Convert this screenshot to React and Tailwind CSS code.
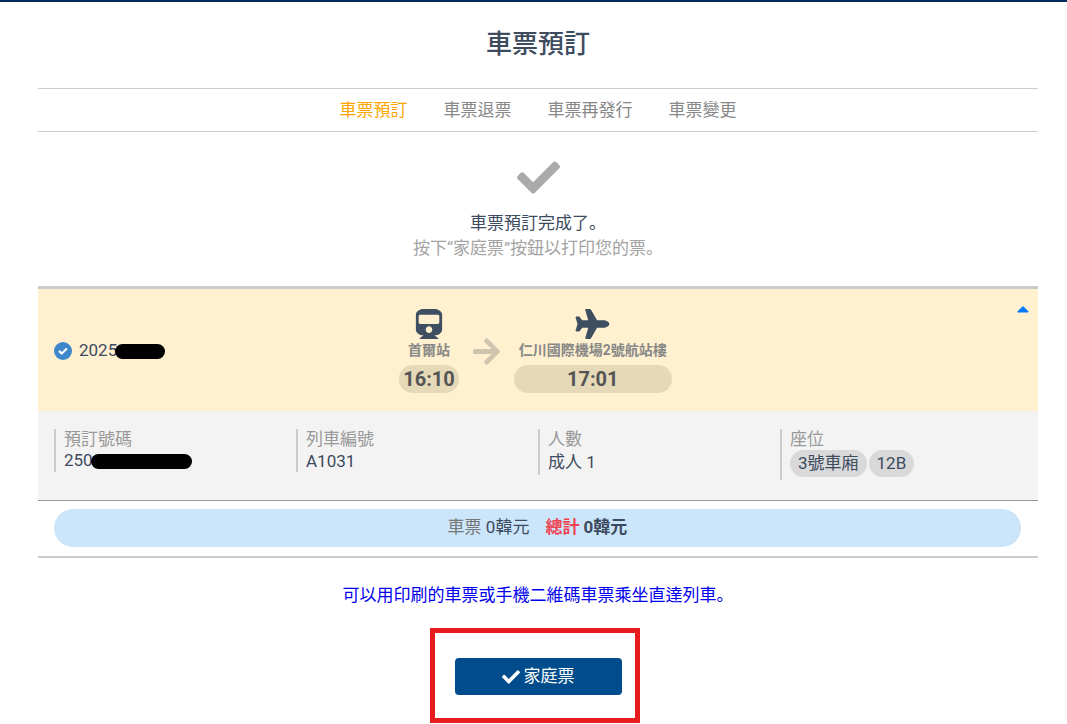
import { FaArrowRight, FaCaretUp, FaCheck, FaPlane, FaTrain } from "react-icons/fa";

const tabs = [
    { label: "車票預訂", active: true },
    { label: "車票退票" },
    { label: "車票再發行" },
    { label: "車票變更" },
];

function CheckBadge() {
    return (
        <svg viewBox="0 0 18 18" className="size-[18px]" aria-hidden="true">
            <circle cx="9" cy="9" r="9" fill="#3c87cb" />
            <path d="M5 8.9l2.7 2.6 5.2-5" fill="none" stroke="#fff" strokeWidth="2.2" />
        </svg>
    );
}

// Blacked out part of a private number
function Redacted({ className }) {
    return <span className={`inline-block h-[15px] rounded-full bg-black ${className}`} />;
}

function Detail({ label, children }) {
    return (
        <div className="border-l-2 border-[#cccccc] pl-2">
            <dt className="leading-[21px] text-[#999999]">{label}</dt>
            <dd>{children}</dd>
        </div>
    );
}

function Station({ icon, name, time }) {
    return (
        <div className="flex flex-col text-center">
            <div className="flex justify-center text-[#3f4f62]">{icon}</div>
            <div className="px-[5px] text-[14px] leading-[22px] font-bold text-[#888888]">{name}</div>
            <div className="mt-1 rounded-full bg-[#e6d9b8] px-1 text-[20px] leading-[28px] font-bold text-[#555555]">
                {time}
            </div>
        </div>
    );
}

export default function App() {
    return (
        <div className="border-t-2 border-[#002b5c] bg-white pr-[29px] pb-7 pl-[38px] font-['Roboto','Noto_Sans_CJK_KR',sans-serif] text-[17px] text-[#3d4b5f]">
            <h1 className="pt-[22px] pb-6 text-center text-[26px] leading-[40px] font-medium">車票預訂</h1>

            {/* Tabs */}
            <nav className="flex h-[44px] items-center justify-center gap-9 border-y border-[#cccccc] pt-[2px]">
                {tabs.map((tab) => (
                    <a
                        key={tab.label}
                        href="#"
                        className={tab.active ? "text-[#ffa500]" : "text-[#888888]"}
                    >
                        {tab.label}
                    </a>
                ))}
            </nav>

            {/* Result message */}
            <div className="pt-6 pb-[25px] text-center leading-[25px]">
                <FaCheck className="mx-auto size-[43px] text-[#aaaaaa]" />
                <p className="mt-3">車票預訂完成了。</p>
                <p className="text-[#a3a3a3]">按下“家庭票”按鈕以打印您的票。</p>
            </div>

            {/* Ticket */}
            <section className="border-t-3 border-b-2 border-t-[#c8cccb] border-b-[#cccccc]">
                <div className="grid h-[122px] grid-cols-[1fr_auto_1fr] items-center bg-[#fff0cf] pt-[2px] pr-[9px] pl-1">
                    <div className="flex items-center pl-3">
                        <CheckBadge />
                        <span className="pl-[7px]">2025</span>
                        <Redacted className="-ml-[2px] w-[50px]" />
                    </div>
                    <div className="flex items-center gap-[14px]">
                        <Station icon={<FaTrain className="size-[30px]" />} name="首爾站" time="16:10" />
                        <FaArrowRight className="h-[31px] w-[27px] text-[#cdc5ae]" />
                        <Station icon={<FaPlane className="h-[30px] w-[35px]" />} name="仁川國際機場2號航站樓" time="17:01" />
                    </div>
                    <button
                        type="button"
                        aria-label="收起"
                        className="mt-2 self-start justify-self-end text-[#007bff]"
                    >
                        <FaCaretUp className="h-[20px] w-[12px]" />
                    </button>
                </div>

                <dl className="grid h-[90px] grid-cols-4 items-start border-b border-[#999999] bg-[#f3f3f3] px-4 pt-[18px]">
                    <Detail label="預訂號碼">
                        <div className="flex h-[22px] items-center">
                            250
                            <Redacted className="-ml-[2px] w-[101px]" />
                        </div>
                    </Detail>
                    <Detail label="列車編號">
                        <div className="leading-[22px]">A1031</div>
                    </Detail>
                    <Detail label="人數">
                        <div className="leading-[25px]">成人 1</div>
                    </Detail>
                    <Detail label="座位">
                        <div className="flex gap-[2px] pb-[3px] leading-[27px]">
                            <span className="rounded-full bg-[#d9d9d9] px-2">3號車廂</span>
                            <span className="rounded-full bg-[#d9d9d9] px-2">12B</span>
                        </div>
                    </Detail>
                </dl>

                <div className="pt-2 pr-[17px] pb-[9px] pl-4">
                    <div className="flex justify-center gap-4 rounded-full bg-[#cbe5fa] pt-[5px] pb-[7px] leading-[26px]">
                        <p>
                            <span className="text-[#777777]">車票</span> 0韓元
                        </p>
                        <p className="font-bold">
                            <span className="text-[#f04455]">總計</span> 0韓元
                        </p>
                    </div>
                </div>
            </section>

            <p className="mt-6 text-center leading-[26px] text-[#0000ee]">
                可以用印刷的車票或手機二維碼車票乘坐直達列車。
            </p>

            <div className="mt-[50px] flex justify-center">
                <div className="relative">
                    <button
                        type="button"
                        className="flex h-[37px] w-[167px] items-center justify-center gap-1 rounded bg-[#004c8c] text-white"
                    >
                        <FaCheck className="size-[18px]" />
                        家庭票
                    </button>
                    <div className="pointer-events-none absolute -top-[30px] -right-[18px] -bottom-[28px] -left-[25px] border-5 border-[#e81b1e]" />
                </div>
            </div>
        </div>
    );
}
